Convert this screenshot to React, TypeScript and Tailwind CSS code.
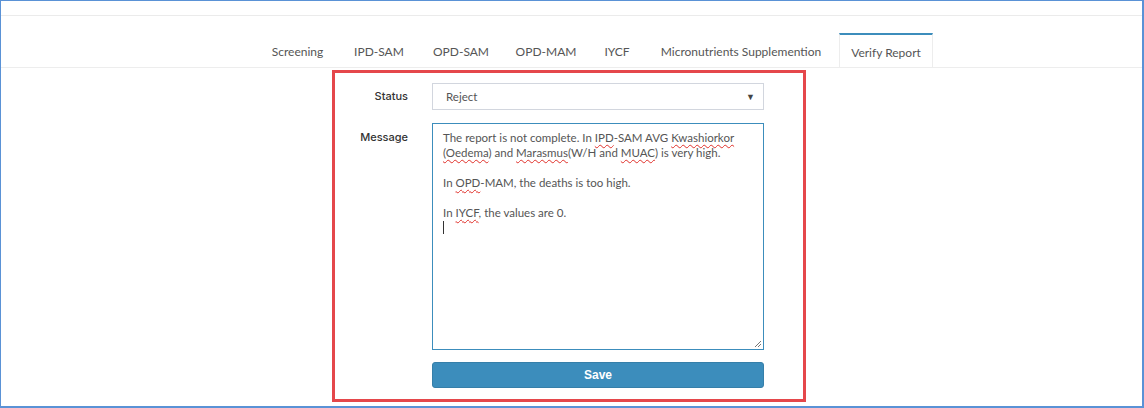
import React from 'react';

const tabs = [
  { label: 'Screening', w: 'w-[83px]' },
  { label: 'IPD-SAM', w: 'w-[80px]' },
  { label: 'OPD-SAM', w: 'w-[84px]' },
  { label: 'OPD-MAM', w: 'w-[86px]' },
  { label: 'IYCF', w: 'w-[56px]' },
  { label: 'Micronutrients Supplemention', w: 'w-[192px]' },
];

const Sp: React.FC<{ children: React.ReactNode }> = ({ children }) => (
  <span className="underline decoration-wavy decoration-[#e0302a] decoration-1 underline-offset-[2px]">
    {children}
  </span>
);

export default function App() {
  return (
    <div
      className="w-[1144px] h-[408px] bg-white border-t border-l border-r-2 border-b-2 border-[#5a92d6] flex flex-col text-[#555]"
      style={{ fontFamily: 'Lato, "Open Sans", sans-serif' }}
    >
      {/* top strip */}
      <div className="h-[15px] border-b border-[#ebebeb] shrink-0" />

      {/* tabs */}
      <div className="pt-[17px] border-b border-[#ededed] shrink-0">
        <div className="flex pl-[255px] h-[34px]">
          {tabs.map((t) => (
            <div
              key={t.label}
              className={`${t.w} flex items-center justify-center pt-[4px] text-[12px] text-[#555]`}
            >
              {t.label}
            </div>
          ))}
          <div className="ml-[2px] w-[94px] flex items-center justify-center pt-[4px] text-[12px] text-[#555] bg-white border-t-2 border-t-[#3c8dbc] border-x border-x-[#ededed]">
            Verify Report
          </div>
        </div>
      </div>

      {/* form */}
      <div className="pl-[331px] pt-[2px] shrink-0">
        <div className="w-[474px] border-[3px] border-[#e5474b] pt-[10px] pr-[39px] pb-[11px] flex flex-col">
          <div className="flex items-center h-[27px] shrink-0">
            <div
              className="w-[73px] shrink-0 text-right text-[11px] font-medium text-[#333]"
              style={{ fontFamily: 'Inter, sans-serif' }}
            >
              Status
            </div>
            <div className="ml-[24px] flex-1 min-w-0 h-[27px] border border-[#d2d6de] flex items-center pl-[13px] pr-[8px] text-[11.5px] text-[#555]">
              <span className="flex-1">Reject</span>
              <span className="text-[9px] text-[#444]">▼</span>
            </div>
          </div>

          <div className="flex items-start mt-[13px] shrink-0">
            <div
              className="w-[73px] shrink-0 text-right text-[11px] font-medium text-[#333] pt-[6px]"
              style={{ fontFamily: 'Inter, sans-serif' }}
            >
              Message
            </div>
            <div className="ml-[24px] flex-1 min-w-0 overflow-hidden h-[227px] border border-[#3c8dbc] relative pl-[10px] pt-[6px] text-[11.5px] leading-[15px] text-[#555] whitespace-nowrap">
              <div>
                The report is not complete. In <Sp>IPD</Sp>-SAM AVG <Sp>Kwashiorkor</Sp>
              </div>
              <div>
                <Sp>(Oedema</Sp>) and <Sp>Marasmus</Sp>(W/H and <Sp>MUAC</Sp>) is very high.
              </div>
              <div className="h-[15px]" />
              <div>
                In <Sp>OPD</Sp>-MAM, the deaths is too high.
              </div>
              <div className="h-[15px]" />
              <div>
                In <Sp>IYCF</Sp>, the values are 0.
              </div>
              <div className="h-[15px] flex items-center">
                <span className="w-px h-[13px] bg-[#333]" />
              </div>
              <svg className="absolute right-[1px] bottom-[1px]" width="9" height="9" viewBox="0 0 9 9">
                <path d="M8 2 L2 8 M8 5 L5 8" stroke="#777" strokeWidth="1" />
              </svg>
            </div>
          </div>

          <div className="flex mt-[12px] shrink-0">
            <div className="w-[73px] shrink-0" />
            <button
              className="ml-[24px] flex-1 h-[26px] bg-[#3c8dbc] border border-[#367fa9] rounded-[3px] text-white text-[12px] font-bold"
              style={{ fontFamily: '"Liberation Sans", Arial, sans-serif' }}
            >
              Save
            </button>
          </div>
        </div>
      </div>
    </div>
  );
}
